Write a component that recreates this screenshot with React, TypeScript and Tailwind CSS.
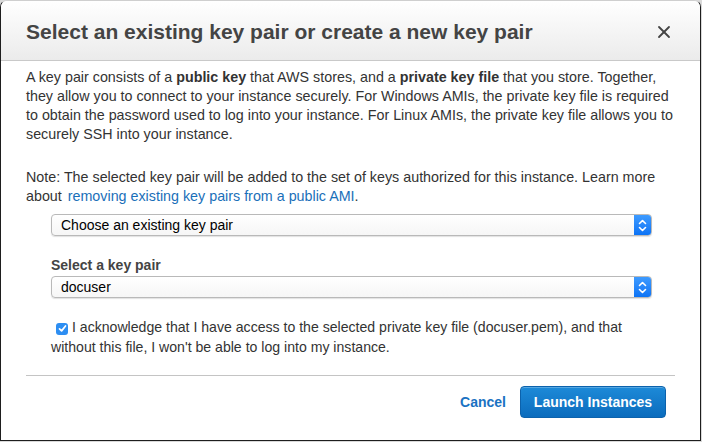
import { X } from 'lucide-react'

function SelectBox({ value }: { value: string }) {
  return (
    <div className="flex h-[22px] w-[601px] items-stretch overflow-hidden rounded-[4px] border border-[#b9b9b9] bg-gradient-to-b from-white to-[#f6f6f6] shadow-[0_1px_1px_rgba(0,0,0,0.12)]">
      <div className="flex flex-1 items-center pl-[9px] text-[14px] text-black">{value}</div>
      <div className="flex w-[17px] items-center justify-center bg-gradient-to-b from-[#3d9bff] to-[#0a73f5]">
        <svg width="9" height="13" viewBox="0 0 9 13" fill="none" stroke="white" strokeWidth="1.6" strokeLinecap="round" strokeLinejoin="round">
          <path d="M1.5 4.5 L4.5 1.5 L7.5 4.5" />
          <path d="M1.5 8.5 L4.5 11.5 L7.5 8.5" />
        </svg>
      </div>
    </div>
  )
}

export default function App() {
  return (
    <div className="h-[442px] w-[702px] bg-[#d9d9d9] font-['Liberation_Sans',Arial,sans-serif]">
      <div className="flex h-[441px] w-[701px] flex-col overflow-hidden rounded-t-[7px] border-x border-b border-[#1e1e1e] border-t-[#cfcfcf] border-t bg-white">
        {/* header */}
        <div className="flex h-[60px] shrink-0 items-center justify-between border-b border-[#c9c9c9] bg-gradient-to-b from-white to-[#ebebeb] pl-[25px] pr-[26px]">
          <h1 className="pt-[2px] text-[21px] font-bold text-[#444]">
            Select an existing key pair or create a new key pair
          </h1>
          <X size={20} strokeWidth={2.2} className="mt-[2px] text-[#444]" />
        </div>

        {/* body */}
        <div className="flex flex-1 flex-col px-[25px] pt-[7px] text-[14.3px] leading-[19px] whitespace-nowrap text-[#333]">
          <p>
            A key pair consists of a <b>public key</b> that AWS stores, and a <b>private key file</b> that you store. Together,
            <br />
            they allow you to connect to your instance securely. For Windows AMIs, the private key file is required
            <br />
            to obtain the password used to log into your instance. For Linux AMIs, the private key file allows you to
            <br />
            securely SSH into your instance.
          </p>
          <p className="mt-[24px]">
            Note: The selected key pair will be added to the set of keys authorized for this instance. Learn more
            <br />
            about <span className="ml-[2px] text-[#1a6fb9]">removing existing key pairs from a public AMI</span>.
          </p>

          <div className="mt-[8px] pl-[25px]">
            <SelectBox value="Choose an existing key pair" />
            <div className="mt-[20px] text-[14px] font-bold text-[#444]">Select a key pair</div>
            <div className="mt-[1px]">
              <SelectBox value="docuser" />
            </div>
            <p className="mt-[19px] text-[14.1px] leading-[20px] text-[#333]">
              <span className="mr-[4px] ml-[5px] inline-flex h-[12px] w-[12px] translate-y-[1px] items-center justify-center rounded-[3px] bg-[#2d8ef2] align-baseline">
                <svg width="9" height="9" viewBox="0 0 9 9" fill="none" stroke="white" strokeWidth="1.7" strokeLinecap="round" strokeLinejoin="round">
                  <path d="M1.5 4.8 L3.6 6.9 L7.5 2" />
                </svg>
              </span>
              I acknowledge that I have access to the selected private key file (docuser.pem), and that
              <br />
              without this file, I won't be able to log into my instance.
            </p>
          </div>

          <div className="mt-[18px] border-t border-[#c4c4c4]" />

          <div className="mt-[10px] flex items-center justify-end gap-[14px] pr-[9px]">
            <span className="text-[14px] font-bold text-[#1a72c2]">Cancel</span>
            <button className="h-[32px] w-[146px] rounded-[4px] border border-[#0c62ac] bg-gradient-to-b from-[#1d8ad8] to-[#0b6cbd] text-[14px] font-bold text-white shadow-[inset_0_1px_0_rgba(255,255,255,0.25)]">
              Launch Instances
            </button>
          </div>
        </div>
      </div>
    </div>
  )
}
